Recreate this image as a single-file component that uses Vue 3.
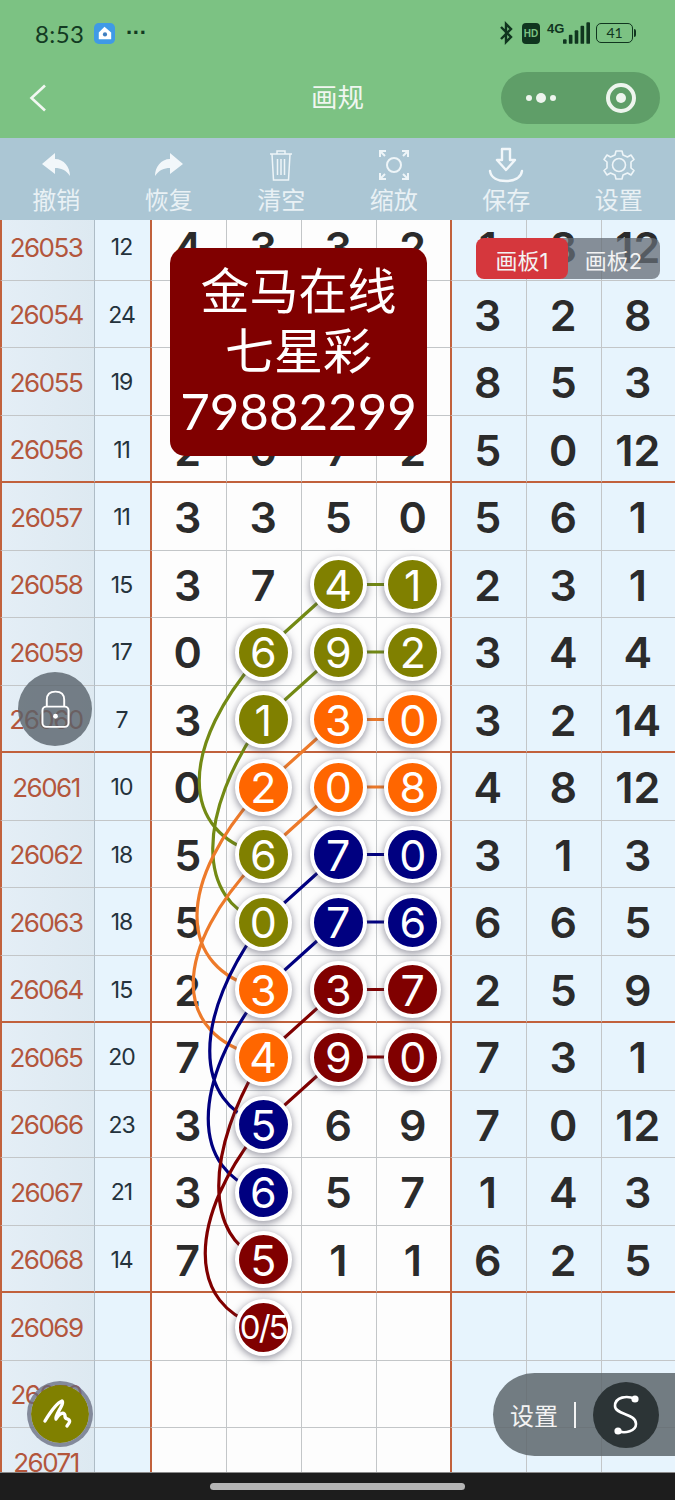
<script setup>
const O = 'o', A = 'a', B = 'b', R = 'r'
const raw = [
  [26053, 12, ['4', '3', '3', '2'], [1, 8, 12]],
  [26054, 24, ['', '', '', ''], [3, 2, 8]],
  [26055, 19, ['', '', '', ''], [8, 5, 3]],
  [26056, 11, ['2', '0', '7', '2'], [5, 0, 12]],
  [26057, 11, ['3', '3', '5', '0'], [5, 6, 1]],
  [26058, 15, ['3', '7', '4' + O, '1' + O], [2, 3, 1]],
  [26059, 17, ['0', '6' + O, '9' + O, '2' + O], [3, 4, 4]],
  [26060, 7, ['3', '1' + O, '3' + A, '0' + A], [3, 2, 14]],
  [26061, 10, ['0', '2' + A, '0' + A, '8' + A], [4, 8, 12]],
  [26062, 18, ['5', '6' + O, '7' + B, '0' + B], [3, 1, 3]],
  [26063, 18, ['5', '0' + O, '7' + B, '6' + B], [6, 6, 5]],
  [26064, 15, ['2', '3' + A, '3' + R, '7' + R], [2, 5, 9]],
  [26065, 20, ['7', '4' + A, '9' + R, '0' + R], [7, 3, 1]],
  [26066, 23, ['3', '5' + B, '6', '9'], [7, 0, 12]],
  [26067, 21, ['3', '6' + B, '5', '7'], [1, 4, 3]],
  [26068, 14, ['7', '5' + R, '1', '1'], [6, 2, 5]],
  [26069, '', ['', '0/5' + R, '', ''], ['', '', '']],
  [26070, '', ['', '', '', ''], ['', '', '']],
  [26071, '', ['', '', '', ''], ['', '', '']],
]
const rows = raw.map(([id, sum, cells, right]) => ({
  id,
  sum,
  right,
  sep: (id - 26056) % 4 === 0 && id <= 26068,
  cells: cells.map((s) => {
    const last = s.slice(-1)
    const ball = 'oabr'.includes(last) && last !== ''
    return { text: ball ? s.slice(0, -1) : s, tone: ball ? last : '' }
  }),
}))
const tools = ['撤销', '恢复', '清空', '缩放', '保存', '设置']
const Y = (n) => 584.5 + n * 67.5
const curve = (row, toRow, c) => {
  const y1 = Y(row), y2 = Y(toRow)
  const start = `M338 ${Y(row - 1)} L263 ${y1}`
  return `${start} C${c} ${y1 + 94} ${c} ${y2 - 20} 263 ${y2}`
}
const wires = [
  { cls: 'w-o', d: `M338 ${Y(0)} H413 M338 ${Y(1)} H413 ` + curve(1, 4, 178) + ' ' + curve(2, 5, 196) },
  { cls: 'w-a', d: `M338 ${Y(2)} H413 M338 ${Y(3)} H413 ` + curve(3, 6, 175) + ' ' + curve(4, 7, 170) },
  { cls: 'w-b', d: `M338 ${Y(4)} H413 M338 ${Y(5)} H413 ` + curve(5, 8, 192) + ' ' + curve(6, 9, 190) },
  { cls: 'w-r', d: `M338 ${Y(6)} H413 M338 ${Y(7)} H413 ` + curve(7, 10, 204) + ' ' + curve(8, 11, 186) },
]
</script>

<template>
  <div class="page">
    <header class="head">
      <div class="status">
        <div class="status-side">
          <span class="time">8:53</span>
          <svg class="app" viewBox="0 0 22 22">
            <rect width="22" height="22" rx="5" fill="#3f9ae6" />
            <path d="M11 4 L18 10 V17 H5 V10 Z" fill="#fff" />
            <circle cx="11.500" cy="12" r="2.200" fill="#3f7fc0" />
          </svg>
          <span class="more">···</span>
        </div>
        <div class="status-side">
          <svg class="bt" viewBox="0 0 16 24">
            <path d="M3 6 L13 16 L8 21 V3 L13 8 L3 18" fill="none" stroke="#10351f" stroke-width="2.400" />
          </svg>
          <span class="hd">HD</span>
          <span class="net">4G</span>
          <svg class="signal" viewBox="0 0 30 24">
            <rect x="0" y="19" width="4" height="5" rx="1" />
            <rect x="6.500" y="14" width="4" height="10" rx="1" />
            <rect x="13" y="9" width="4" height="15" rx="1" />
            <rect x="19.500" y="4" width="4" height="20" rx="1" />
            <rect x="26" y="0" width="4" height="24" rx="1" />
          </svg>
          <span class="battery">41</span>
          <span class="battery-tip"></span>
        </div>
      </div>
      <div class="nav">
        <svg class="back" viewBox="0 0 18 28">
          <path d="M16 1.500 L2.500 14 L16 26.500" fill="none" stroke="#f2f7f2" stroke-width="2.600" />
        </svg>
        <span class="title">画规</span>
        <div class="capsule">
          <span class="dots"><i></i><i class="big"></i><i></i></span>
          <span class="target"><i></i></span>
        </div>
      </div>
    </header>

    <nav class="tools">
      <div v-for="(t, i) in tools" :key="t" class="tool">
        <svg class="tool-icon" viewBox="0 0 36 36">
          <path v-if="i === 0" d="M4 17 L17 6 V12 C26 12 32 20 32 29 C28 23 23 21 17 21 V27 Z" fill="#f2f7fa" />
          <path v-else-if="i === 1" d="M32 17 L19 6 V12 C10 12 4 20 4 29 C8 23 13 21 19 21 V27 Z" fill="#f2f7fa" />
          <g v-else-if="i === 2" fill="none" stroke="#eef5f8" stroke-width="1.500">
            <path d="M7 7 H29 M14 7 V4 H22 V7 M9 7 L10.500 33 H25.500 L27 7 M14.500 12 V28 M18 12 V28 M21.500 12 V28" />
          </g>
          <g v-else-if="i === 3" fill="none" stroke="#eef5f8" stroke-width="2">
            <circle cx="18" cy="18" r="7" />
            <path d="M4 10 V4 H10 M4 4 L9 9 M26 4 H32 V10 M32 4 L27 9 M4 26 V32 H10 M4 32 L9 27 M26 32 H32 V26 M32 32 L27 27" />
          </g>
          <g v-else-if="i === 4" fill="none" stroke="#f2f7fa" stroke-width="2.400" stroke-linejoin="round" stroke-linecap="round">
            <path d="M14 2 H22 V13 H27 L18 23 L9 13 H14 Z" />
            <path d="M2 24 C3 31 10 34 18 34 C26 34 33 31 34 24" />
          </g>
          <g v-else fill="none" stroke="#eef5f8" stroke-width="1.600" stroke-linejoin="round">
            <circle cx="18" cy="18" r="6.500" />
            <path d="M15 4 H21 L22 8 L26.500 10 L30 8 L33 12.500 L30 15 V21 L33 23.500 L30 28 L26.500 26 L22 28 L21 32 H15 L14 28 L9.500 26 L6 28 L3 23.500 L6 21 V15 L3 12.500 L6 8 L9.500 10 L14 8 Z" />
          </g>
        </svg>
        <span class="tool-label">{{ t }}</span>
      </div>
    </nav>

    <main class="board">
      <div class="rows">
        <div v-for="r in rows" :key="r.id" class="row" :class="{ sep: r.sep }">
          <div class="cell issue">{{ r.id }}</div>
          <div class="cell sum">{{ r.sum }}</div>
          <div v-for="(c, i) in r.cells" :key="i" class="cell num" :class="{ first: i === 0 }">
            <span v-if="c.tone" class="ball" :class="['t-' + c.tone, { small: c.text.length > 1 }]">{{ c.text }}</span>
            <template v-else>{{ c.text }}</template>
          </div>
          <div v-for="(n, i) in r.right" :key="'r' + i" class="cell num side" :class="{ first: i === 0 }">{{ n }}</div>
        </div>
      </div>
      <svg class="wires" viewBox="0 220 675 1252" width="675" height="1252">
        <path v-for="w in wires" :key="w.cls" :class="w.cls" :d="w.d" fill="none" stroke-width="3.200" />
      </svg>

      <div class="banner">
        <span>金马在线</span>
        <span>七星彩</span>
        <span>79882299</span>
      </div>
      <div class="boards">
        <span class="tab off">画板2</span>
        <span class="tab on">画板1</span>
      </div>
      <div class="lock">
        <svg viewBox="0 0 30 40" width="29" height="39">
          <path d="M6 17 V10 C6 4 10 1.500 15 1.500 C20 1.500 24 4 24 10 V17" fill="none" stroke="#fff" stroke-width="2" />
          <rect x="1.500" y="17" width="27" height="21" rx="4" fill="none" stroke="#fff" stroke-width="2" />
          <circle cx="15" cy="27" r="2.500" fill="#fff" />
        </svg>
      </div>
      <div class="pen">
        <svg viewBox="0 0 36 32" width="36" height="32">
          <path d="M3 23 C9 13 15 5 20 3 C23 6 12 18 14 21 C18 14 23 14 23 18 C23 22 26 20 27 22 C29 24 26 26 25 28" fill="none" stroke="#fff" stroke-width="3.400" stroke-linecap="round" stroke-linejoin="round" />
        </svg>
      </div>
      <div class="setting">
        <span class="setting-text">设置</span>
        <span class="setting-bar"></span>
        <span class="setting-btn">
          <svg viewBox="0 0 34 44" width="34" height="44">
            <path d="M26 6 C18 2 6 4 6 13 C6 22 27 20 27 31 C27 38 16 41 9 38" fill="none" stroke="#fff" stroke-width="2.600" />
            <circle cx="26" cy="6" r="3.600" fill="#fff" />
            <circle cx="9" cy="38" r="3.600" fill="#fff" />
          </svg>
        </span>
      </div>
    </main>

    <footer class="homebar"><span></span></footer>
  </div>
</template>

<style>
html, body { margin: 0; background: #1d1d1d; }
</style>

<style scoped>
.page {
  width: 675px;
  height: 1500px;
  overflow: hidden;
  position: relative;
  display: flex;
  flex-direction: column;
  font-family: Inter, "Noto Sans CJK SC", sans-serif;
}
.head { height: 138px; background: #7cc283; flex: none; }
.status {
  height: 66px;
  padding: 0 39px 0 35px;
  display: flex;
  align-items: center;
  justify-content: space-between;
}
.status-side { display: flex; align-items: center; }
.time { font-family: Lato, sans-serif; font-size: 24px; color: #123a22; width: 59px; letter-spacing: .4px; }
.app { width: 21px; height: 21px; }
.more { margin-left: 11px; color: #123a22; font-size: 22px; font-weight: 700; letter-spacing: -.5px; font-family: "Liberation Sans", sans-serif; }
.bt { width: 16px; height: 24px; }
.hd {
  margin-left: 8px;
  width: 18px;
  height: 21px;
  background: #10351f;
  color: #7cc283;
  border-radius: 4px;
  font: 700 10px/21px "Liberation Sans", sans-serif;
  text-align: center;
}
.net { margin-left: 7px; margin-top: -10px; font: 700 13px "Liberation Sans", sans-serif; color: #10351f; width: 13px; }
.signal { width: 27px; height: 22px; fill: #10351f; margin-left: 3px; }
.battery {
  margin-left: 6px;
  box-sizing: border-box;
  width: 37px;
  height: 20px;
  border: 1.800px solid #10351f;
  border-radius: 5px;
  color: #10351f;
  font-family: Lato, sans-serif;
  font-size: 14px;
  line-height: 17px;
  text-align: center;
}
.battery-tip { width: 2px; height: 8px; background: #10351f; margin-left: 1px; border-radius: 0 2px 2px 0; }
.nav {
  height: 52px;
  margin-top: 6px;
  padding: 0 15px;
  display: grid;
  grid-template-columns: 1fr auto 1fr;
  align-items: center;
}
.back { width: 18px; height: 28px; margin-left: 14px; }
.title { font-size: 26.500px; line-height: 50px; color: #f0f6f0; margin-top: -2px; }
.capsule {
  width: 159px;
  height: 52px;
  border-radius: 26px;
  background: #5f9e68;
  display: flex;
  align-items: center;
  padding: 0 24px 0 25px;
  box-sizing: border-box;
  justify-content: space-between;
  justify-self: end;
}
.dots { display: flex; align-items: center; gap: 4px; }
.dots i { width: 6px; height: 6px; border-radius: 50%; background: #eef5ee; }
.dots i.big { width: 10px; height: 10px; }
.target {
  width: 30px;
  height: 30px;
  box-sizing: border-box;
  border: 4px solid #eef5ee;
  border-radius: 50%;
  display: flex;
  align-items: center;
  justify-content: center;
}
.target i { width: 10px; height: 10px; background: #eef5ee; border-radius: 50%; }
.tools {
  height: 82px;
  flex: none;
  background: #abc6d4;
  display: grid;
  grid-template-columns: repeat(6, 1fr);
}
.tool { display: flex; flex-direction: column; align-items: center; padding-top: 9px; }
.tool-icon { width: 36px; height: 36px; }
.tool-label { font-size: 24px; line-height: 30px; margin-top: 3px; color: #e9f1f5; }
.board { height: 1252px; flex: none; position: relative; overflow: hidden; background: #fdfdfd; }
.rows { margin-top: -7px; }
.row {
  height: 67.500px;
  display: grid;
  grid-template-columns: 94px 56px 76px 75px 75px 74px 76px 75px 74px;
}
.cell {
  box-sizing: border-box;
  display: flex;
  align-items: center;
  justify-content: center;
  border-bottom: 1.500px solid #c3c6c8;
  padding-top: 1.500px;
}
.row.sep .cell { border-bottom: 2.500px solid #c1613c; padding-top: 2.500px; }
.issue {
  background: linear-gradient(90deg, #e4eef6, #dde9f1);
  border-left: 2.500px solid #c1613c;
  color: #b3563c;
  font-size: 26px;
  letter-spacing: -1.500px;
  padding-right: 4px;
}
.sum {
  background: #e7f4fd;
  color: #24323c;
  font-size: 23px;
  letter-spacing: -1px;
  border-left: 1.500px solid #aebcc6;
  padding-right: 2px;
}
.num {
  background: #fdfdfd;
  color: #2b2b2b;
  font-size: 43px;
  font-weight: 600;
  border-left: 1.500px solid #c3c6c8;
  padding-right: 1.500px;
}
.num.first { border-left: 2.500px solid #c1613c; padding-right: 2.500px; }
.num.side { background: #e7f4fd; }
.ball {
  position: relative;
  z-index: 2;
  box-sizing: content-box;
  width: 49px;
  height: 49px;
  border: 4.500px solid #fff;
  border-radius: 50%;
  display: flex;
  align-items: center;
  justify-content: center;
  color: #fff;
  font-size: 43px;
  font-weight: 400;
  box-shadow: 0 2px 7px 1px rgba(70, 70, 90, .5);
  flex: none;
}
.ball.small { font-size: 33px; letter-spacing: -2px; }
.t-o { background: #808000; }
.t-a { background: #ff6600; }
.t-b { background: #000080; }
.t-r { background: #800000; }
.wires { position: absolute; left: 0; top: 0; z-index: 1; pointer-events: none; }
.w-o { stroke: #738a14; }
.w-a { stroke: #ed7a2a; }
.w-b { stroke: #000080; }
.w-r { stroke: #800000; }
.banner {
  position: absolute;
  z-index: 3;
  left: 170px;
  top: 28px;
  width: 257px;
  height: 208px;
  box-sizing: border-box;
  padding-top: 14px;
  border-radius: 15px;
  background: #800000;
  color: #fff;
  display: flex;
  flex-direction: column;
  align-items: center;
  font-size: 49px;
  line-height: 60px;
}
.banner span:last-child { font-family: Lato, sans-serif; font-size: 51px; margin-top: -1px; }
.boards { position: absolute; z-index: 3; left: 476px; top: 18px; width: 184px; height: 41px; }
.tab {
  position: absolute;
  top: 0;
  height: 41px;
  line-height: 46px;
  color: #f3f3f3;
  font-size: 22px;
  border-radius: 8px;
  text-align: center;
}
.tab.on { left: 0; width: 92px; background: #d5373d; }
.tab.off { right: 0; width: 105px; background: rgba(100, 108, 118, .75); padding-left: 12px; box-sizing: border-box; }
.lock {
  position: absolute;
  z-index: 3;
  left: 18px;
  top: 452px;
  width: 74px;
  height: 74px;
  border-radius: 50%;
  background: rgba(88, 98, 106, .8);
  display: flex;
  align-items: center;
  justify-content: center;
}
.pen {
  position: absolute;
  z-index: 3;
  left: 27px;
  top: 1161px;
  width: 58px;
  height: 58px;
  border: 4px solid rgba(100, 105, 125, .75);
  border-radius: 50%;
  background: #808000;
  background-clip: padding-box;
  display: flex;
  align-items: center;
  justify-content: center;
}
.setting {
  position: absolute;
  z-index: 3;
  right: 0;
  top: 1153px;
  width: 182px;
  height: 83px;
  border-radius: 42px 0 0 42px;
  background: rgba(94, 104, 110, .86);
  display: flex;
  align-items: center;
  box-sizing: border-box;
  padding-left: 17px;
}
.setting-text { font-size: 24px; color: #f3f3f3; }
.setting-bar { width: 2px; height: 26px; margin-left: 16px; background: #f3f3f3; }
.setting-btn {
  margin-left: 17px;
  width: 66px;
  height: 66px;
  border-radius: 50%;
  background: #2c3436;
  display: flex;
  align-items: center;
  justify-content: center;
}
.homebar {
  flex: 1;
  background: #1d1d1d;
  border-top: 1px solid #8a8a8a;
  box-sizing: border-box;
  display: flex;
  justify-content: center;
  padding-top: 10px;
}
.homebar span { width: 255px; height: 7px; border-radius: 4px; background: #b5b5b5; }
</style>
